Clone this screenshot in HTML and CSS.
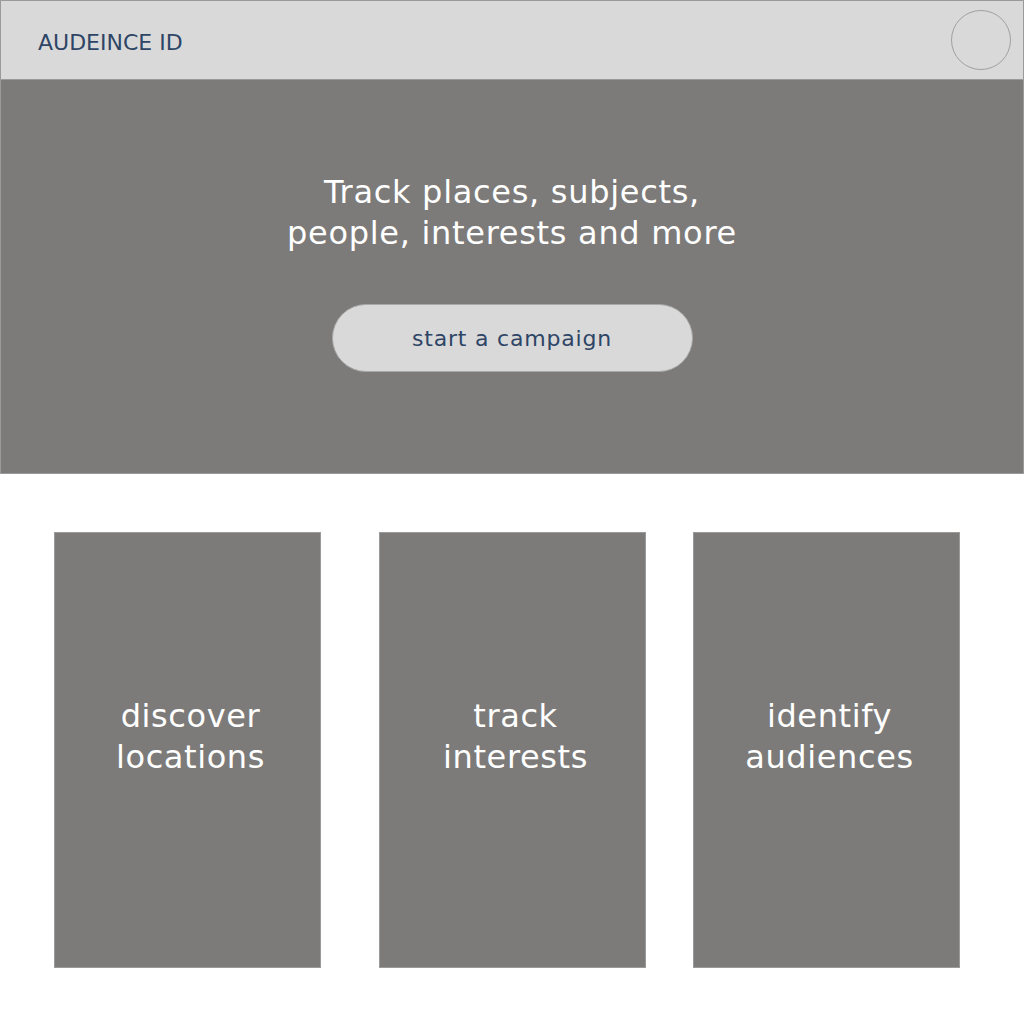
FILE: index.html
```html
<!DOCTYPE html>
<html>
<head>
<meta charset="utf-8">
<link rel="stylesheet" href="styles.css">
</head>
<body>
<header class="topbar">
  <div class="logo">AUDEINCE ID</div>
  <div class="avatar"></div>
</header>
<section class="hero">
  <h1 class="hero-title">Track places, subjects,<br>people, interests and more</h1>
  <button class="cta">start a campaign</button>
</section>
<section class="features">
  <div class="card card-1"><span>discover<br>locations</span></div>
  <div class="card card-2"><span>track<br>interests</span></div>
  <div class="card card-3"><span>identify<br>audiences</span></div>
</section>
</body>
</html>
```
FILE: styles.css
```css
html, body {
  margin: 0;
  padding: 0;
  background: #ffffff;
  font-family: "DejaVu Sans", "Open Sans", sans-serif;
}
.topbar {
  box-sizing: border-box;
  height: 80px;
  background: #d9d9d9;
  border: 1px solid #9a9a9a;
  display: flex;
  align-items: center;
  justify-content: space-between;
  padding: 0 12px 0 37px;
}
.logo {
  color: #2e4566;
  font-size: 22px;
  letter-spacing: 0;
  padding-top: 5px;
}
.avatar {
  box-sizing: border-box;
  width: 60px;
  height: 60px;
  border-radius: 50%;
  border: 1px solid #a0a0a0;
  margin-top: -1px;
}
.hero {
  box-sizing: border-box;
  height: 395px;
  margin-top: -1px;
  background: #7c7b79;
  border: 1px solid #9a9a9a;
  display: flex;
  flex-direction: column;
  align-items: center;
  padding-top: 92px;
}
.hero-title {
  margin: 0;
  color: #ffffff;
  font-weight: normal;
  font-size: 32px;
  letter-spacing: 0.7px;
  line-height: 41px;
  text-align: center;
}
.cta {
  box-sizing: border-box;
  margin-top: 50px;
  width: 361px;
  height: 68px;
  border-radius: 34px;
  border: 1px solid #a8a8a8;
  background: #d9d9d9;
  color: #2e4566;
  font-family: inherit;
  font-size: 22px;
  letter-spacing: 0.8px;
  padding: 0;
}
.features {
  display: flex;
  padding: 58px 0 0 54px;
}
.card {
  box-sizing: border-box;
  width: 267px;
  height: 436px;
  background: #7c7b79;
  border: 1px solid #9a9a9a;
  display: flex;
  align-items: center;
  justify-content: center;
  color: #ffffff;
  font-size: 32px;
  letter-spacing: 0.6px;
  line-height: 41px;
  text-align: center;
  padding: 0 0 26px 6px;
}
.card-2 { margin-left: 58px; }
.card-3 { margin-left: 47px; }
```
